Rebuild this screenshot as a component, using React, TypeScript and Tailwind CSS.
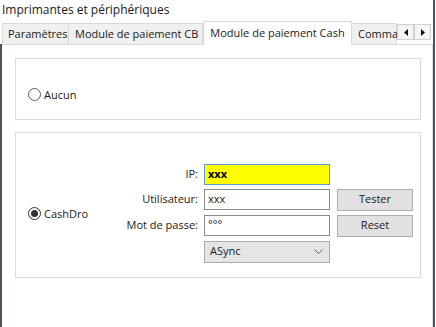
import React from "react"

const font = { fontFamily: '"Open Sans", "Noto Sans", sans-serif' }

function Radio({ checked, label }: { checked?: boolean; label: string }) {
  return (
    <div className="flex items-center gap-[3px]">
      <span
        className={
          "flex h-[13px] w-[13px] items-center justify-center rounded-full border bg-white " +
          (checked ? "border-[#333333]" : "border-[#5c5c5c]")
        }
      >
        {checked && <span className="h-[7px] w-[7px] rounded-full bg-[#333333]" />}
      </span>
      <span className="text-[11px] leading-none text-[#1a1a1a]">{label}</span>
    </div>
  )
}

function Tab({ label, w, active }: { label: string; w: string; active?: boolean }) {
  if (active) {
    return (
      <div
        className={`${w} relative z-10 -mb-px flex h-[24px] shrink-0 items-start justify-center border border-b-0 border-[#d9d9d9] bg-white pt-[3px] text-[11px] text-[#1a1a1a]`}
      >
        {label}
      </div>
    )
  }
  return (
    <div
      className={`${w} flex h-[21px] shrink-0 items-center whitespace-nowrap border border-b-0 border-l-0 border-[#d9d9d9] bg-[#f0f0f0] pl-[6px] pt-[1px] text-[11px] text-[#1a1a1a]`}
    >
      {label}
    </div>
  )
}

function ArrowBtn({ dir }: { dir: "l" | "r" }) {
  return (
    <div className="flex h-[16px] w-[17px] items-center justify-center border border-[#d0d0d0] bg-[#f5f5f5]">
      <svg width="4" height="7" viewBox="0 0 4 7">
        {dir === "l" ? <path d="M4 0 L0 3.5 L4 7 Z" fill="#111" /> : <path d="M0 0 L4 3.5 L0 7 Z" fill="#111" />}
      </svg>
    </div>
  )
}

export default function App() {
  return (
    <div className="relative flex h-[327px] w-[436px] flex-col overflow-hidden bg-white" style={font}>
      {/* right window edge */}
      <div className="absolute right-[1px] top-0 h-full w-[2px] bg-[#4b5560]" />

      {/* title */}
      <div className="h-[20px] pl-[2px] pt-[1px] text-[12px] leading-[18px] text-[#1a1a1a]">
        Imprimantes et périphériques
      </div>

      {/* tab strip */}
      <div className="flex h-[24px] items-end pl-[2px] pr-[3px]">
        <div className="flex h-[21px] w-[67px] shrink-0 items-center border border-b-0 border-[#d9d9d9] bg-[#f0f0f0] pl-[5px] pt-[1px] text-[11px] text-[#1a1a1a]">
          Paramètres
        </div>
        <Tab label="Module de paiement CB" w="w-[134px]" />
        <Tab label="Module de paiement Cash" w="w-[149px]" active />
        <Tab label="Comma" w="w-[45px]" />
        <div className="mb-[4px] flex self-end">
          <ArrowBtn dir="l" />
          <ArrowBtn dir="r" />
        </div>
      </div>

      {/* panel */}
      <div className="flex flex-1 flex-col border-l-2 border-[#4b5560] pr-[3px]">
        <div className="flex flex-1 flex-col gap-[12px] border-r border-t border-[#d9d9d9] bg-white pl-[13px] pr-[11px] pt-[13px]">
          {/* group aucun */}
          <div className="flex h-[62px] items-end border border-[#dcdcdc] pb-[18px] pl-[12px]">
            <Radio label="Aucun" />
          </div>

          {/* group cashdro */}
          <div className="flex h-[146px] items-center border border-[#dcdcdc] pt-[16px]">
            <div className="w-[101px] shrink-0 pl-[12px]">
              <Radio checked label="CashDro" />
            </div>
            <div className="grid grid-cols-[81px_126px_77px] gap-x-[6px] gap-y-[4px] text-[11px] text-[#1a1a1a]">
              <div className="flex items-center justify-end whitespace-nowrap">IP:</div>
              <div className="flex h-[21px] items-center border border-[#5a9bd8] bg-[#ffff00] pl-[3px] font-bold text-black">
                xxx
              </div>
              <div />

              <div className="flex items-center justify-end whitespace-nowrap">Utilisateur:</div>
              <div className="flex h-[21px] items-center border border-[#8a8a8a] bg-white pl-[3px]">xxx</div>
              <div className="ml-[1px] flex h-[22px] items-center justify-center border border-[#adadad] bg-[#e1e1e1]">
                Tester
              </div>

              <div className="flex items-center justify-end whitespace-nowrap">Mot de passe:</div>
              <div className="flex h-[21px] items-start border border-[#8a8a8a] bg-white pl-[3px] pt-[2px] leading-none">
                °°°
              </div>
              <div className="ml-[1px] flex h-[22px] items-center justify-center border border-[#adadad] bg-[#e1e1e1]">
                Reset
              </div>

              <div />
              <div className="flex h-[22px] items-center justify-between border border-[#acacac] bg-[#e5e5e5] pl-[5px] pr-[6px]">
                <span>ASync</span>
                <svg width="9" height="5" viewBox="0 0 9 5">
                  <path d="M0.5 0.5 L4.5 4.5 L8.5 0.5" fill="none" stroke="#666" strokeWidth="1" />
                </svg>
              </div>
              <div />
            </div>
          </div>
        </div>
      </div>
    </div>
  )
}
